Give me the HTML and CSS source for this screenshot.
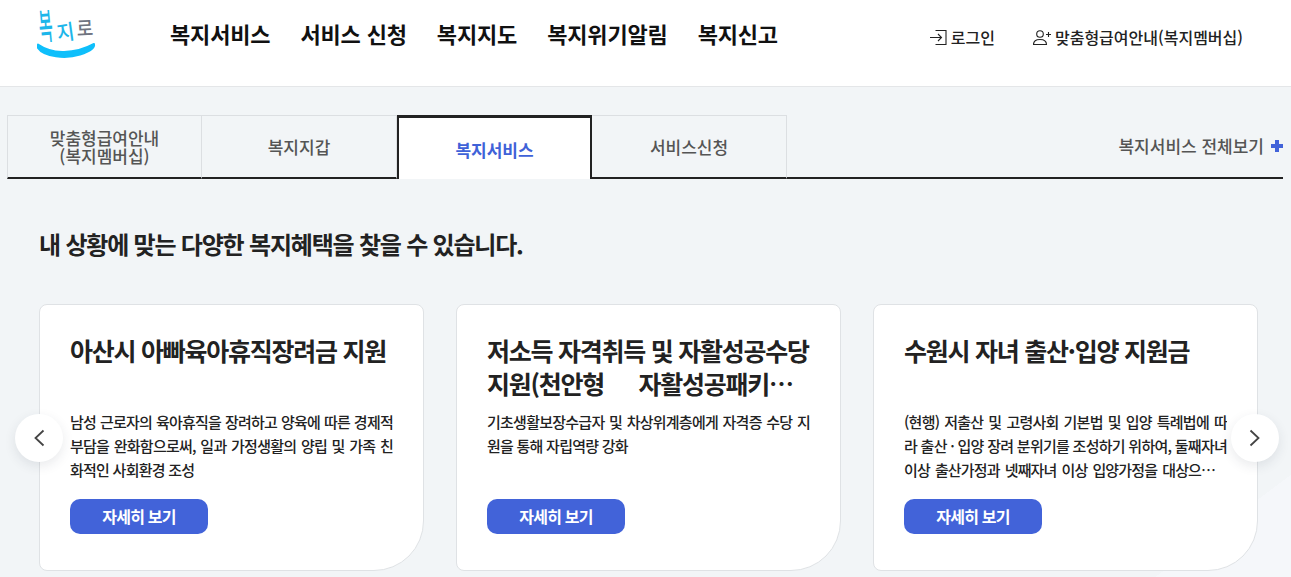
FILE: index.html
```html
<!DOCTYPE html>
<html lang="ko">
<head>
<meta charset="utf-8">
<title>복지로</title>
<link rel="stylesheet" href="styles.css">
</head>
<body>
<header class="header">
  <a class="logo" aria-label="복지로">
    <svg width="64" height="60" viewBox="0 0 64 60">
      <text class="logo-b" transform="translate(4 36) rotate(-5) scale(.75 1.8)">복</text>
      <text class="logo-j" transform="translate(22 37) rotate(-8) scale(.95 1.05)">지</text>
      <text class="logo-r" transform="translate(41 32) rotate(-3) scale(.9 1)">로</text>
      <path class="logo-smile" d="M2 40.500C14 49 36 52 58 40C59 44 52 48 44 50.500C30 55 8 53 2 44Z"/>
    </svg>
  </a>
  <nav class="gnb">
    <a>복지서비스</a><a>서비스 신청</a><a>복지지도</a><a>복지위기알림</a><a>복지신고</a>
  </nav>
  <div class="util">
    <a class="util-link">
      <svg width="17" height="15" viewBox="0 0 17 15"><path d="M5.500.5h10.500v14H5.500M0 7.500h11.500M8 4l3.500 3.500L8 11"/></svg>
      로그인
    </a>
    <a class="util-link">
      <svg width="18" height="15" viewBox="0 0 18 15"><circle cx="7" cy="4" r="3.300"/><path d="M.5 14.500c0-3.500 2.300-5 6.500-5s6.500 1.500 6.500 5zM13 4.500h5M15.500 2v5"/></svg>
      맞춤형급여안내(복지멤버십)
    </a>
  </div>
</header>
<main class="main">
  <div class="tabs">
    <a class="tab">맞춤형급여안내<br>(복지멤버십)</a>
    <a class="tab">복지지갑</a>
    <a class="tab tab-on">복지서비스</a>
    <a class="tab">서비스신청</a>
    <a class="more">복지서비스 전체보기<span class="plus"></span></a>
  </div>
  <h2 class="lead">내 상황에 맞는 다양한 복지혜택을 찾을 수 있습니다.</h2>
  <section class="slider">
    <button class="arrow arrow-prev" aria-label="이전"><svg width="12" height="20" viewBox="0 0 12 20"><path d="M10.500 2.500L2.500 10l8 7.500"/></svg></button>
    <article class="card">
      <h3 class="card-title">아산시 아빠육아휴직장려금 지원</h3>
      <p class="card-text">남성 근로자의 육아휴직을 장려하고 양육에 따른 경제적 부담을 완화함으로써, 일과 가정생활의 양립 및 가족 친화적인 사회환경 조성</p>
      <a class="btn">자세히 보기</a>
    </article>
    <article class="card">
      <h3 class="card-title">저소득 자격취득 및 자활성공수당 지원(천안형 &nbsp; &nbsp;&nbsp; 자활성공패키지) 지원 사업</h3>
      <p class="card-text">기초생활보장수급자 및 차상위계층에게 자격증 수당 지원을 통해 자립역량 강화</p>
      <a class="btn">자세히 보기</a>
    </article>
    <article class="card">
      <h3 class="card-title">수원시 자녀 출산·입양 지원금</h3>
      <p class="card-text">(현행) 저출산 및 고령사회 기본법 및 입양 특례법에 따라 출산 · 입양 장려 분위기를 조성하기 위하여, 둘째자녀 <span class="tight">이상 출산가정과 넷째자녀 이상 입양가정을 대상으로하는</span> 지원금을 지급함</p>
      <a class="btn">자세히 보기</a>
    </article>
    <button class="arrow arrow-next" aria-label="다음"><svg width="12" height="20" viewBox="0 0 12 20"><path d="M1.500 2.500l8 7.500-8 7.500"/></svg></button>
  </section>
</main>
</body>
</html>
```
FILE: styles.css
```css
* { box-sizing: border-box; }
html, body { height: 100%; }
body {
  margin: 0;
  height: 577px;
  overflow: hidden;
  background: linear-gradient(143deg, #f2f5f7 93.4%, #f5f7fa 93.4%);
  color: #1a1a1a;
  font-family: "Noto Sans CJK KR", "Noto Sans", sans-serif;
}
.header {
  height: 87px;
  background: #fff;
  border-bottom: 1px solid #e4e6e8;
  display: flex;
  align-items: flex-start;
  padding-left: 36px;
}
.logo { width: 64px; height: 60px; margin-top: 4px; flex: none; }
.logo svg { display: block; }
.logo text { font-family: "Noto Sans CJK KR", sans-serif; font-size: 20px; font-weight: 500; }
.logo-b, .logo-j { fill: #1db6ea; }
.logo-r { fill: #6f7480; }
.logo-smile { fill: #0fbffb; stroke: #0fbffb; stroke-width: 2; stroke-linejoin: round; }
.gnb {
  display: flex;
  gap: 30px;
  margin-left: 70px;
  margin-top: 18px;
  font-size: 22px;
  line-height: 30px;
  font-weight: 700;
  letter-spacing: -.16px;
  color: #111;
}
.util {
  display: flex;
  gap: 38px;
  margin-left: auto;
  margin-right: 48px;
  margin-top: 26px;
  font-size: 16px;
  line-height: 22px;
  font-weight: 500;
  color: #222;
}
.util-link { display: flex; align-items: center; gap: 4px; }
.util-link svg { fill: none; stroke: #222; stroke-width: 1.100; }
.main { padding: 28px 8px 0 7px; }
.tabs {
  display: flex;
  height: 64px;
  border-bottom: 2px solid #222;
  align-items: stretch;
}
.tab {
  width: 195px;
  height: 64px;
  border: 1px solid #dcdfe2;
  border-left-width: 0;
  border-bottom: 2px solid #222;
  display: flex;
  align-items: center;
  justify-content: center;
  text-align: center;
  font-size: 17px;
  line-height: 18px;
  font-weight: 500;
  color: #555;
}
.tab:first-child { border-left-width: 1px; }
.tab-on {
  background: #fff;
  border: 2px solid #222;
  border-top-width: 3px;
  border-bottom: 0;
  color: #3f62d8;
  font-weight: 700;
  padding-top: 2px;
}
.more {
  margin-left: auto;
  align-self: flex-start;
  margin-top: 19px;
  display: flex;
  align-items: center;
  gap: 7px;
  font-size: 17px;
  line-height: 24px;
  font-weight: 500;
  color: #555;
}
.plus {
  width: 12px;
  height: 12px;
  background:
    linear-gradient(#4263d9, #4263d9) center / 12px 4px no-repeat,
    linear-gradient(#4263d9, #4263d9) center / 4px 12px no-repeat;
}
.lead {
  margin: 46px 0 0 32px;
  font-size: 24px;
  line-height: 38px;
  font-weight: 700;
  letter-spacing: -.05em;
  color: #222;
}
.slider {
  position: relative;
  display: flex;
  gap: 32px;
  margin: 41px 0 0 32px;
}
.card {
  flex: none;
  width: 385px;
  height: 267px;
  background: #fff;
  border: 1px solid #dfe2e5;
  border-radius: 8px 8px 50px 8px;
  padding: 29px 30px 0;
  display: flex;
  flex-direction: column;
}
.card-title {
  margin: 0;
  height: 66px;
  font-size: 25px;
  line-height: 33px;
  font-weight: 700;
  letter-spacing: -.05em;
  color: #222;
  display: -webkit-box;
  -webkit-line-clamp: 2;
  -webkit-box-orient: vertical;
  overflow: hidden;
}
.card-text {
  margin: 10px 0 0;
  height: 72px;
  font-size: 15px;
  line-height: 24px;
  font-weight: 500;
  letter-spacing: -.05em;
  text-align: justify;
  color: #222;
  display: -webkit-box;
  -webkit-line-clamp: 3;
  -webkit-box-orient: vertical;
  overflow: hidden;
}
.tight { letter-spacing: -.84px; }
.btn {
  width: 138px;
  height: 35px;
  margin-top: 17px;
  border-radius: 10px;
  background: #4263d9;
  color: #fff;
  font-size: 16px;
  font-weight: 700;
  letter-spacing: -.05em;
  line-height: 35px;
  text-align: center;
}
.arrow {
  position: absolute;
  top: 110px;
  width: 48px;
  height: 48px;
  padding: 0;
  border: 0;
  border-radius: 50%;
  background: #fff;
  box-shadow: 0 4px 12px rgba(40, 50, 70, .1);
  display: flex;
  align-items: center;
  justify-content: center;
}
.arrow svg { fill: none; stroke: #444; stroke-width: 1.800; }
.arrow-prev { left: -24px; }
.arrow-next { right: 4px; }
```
